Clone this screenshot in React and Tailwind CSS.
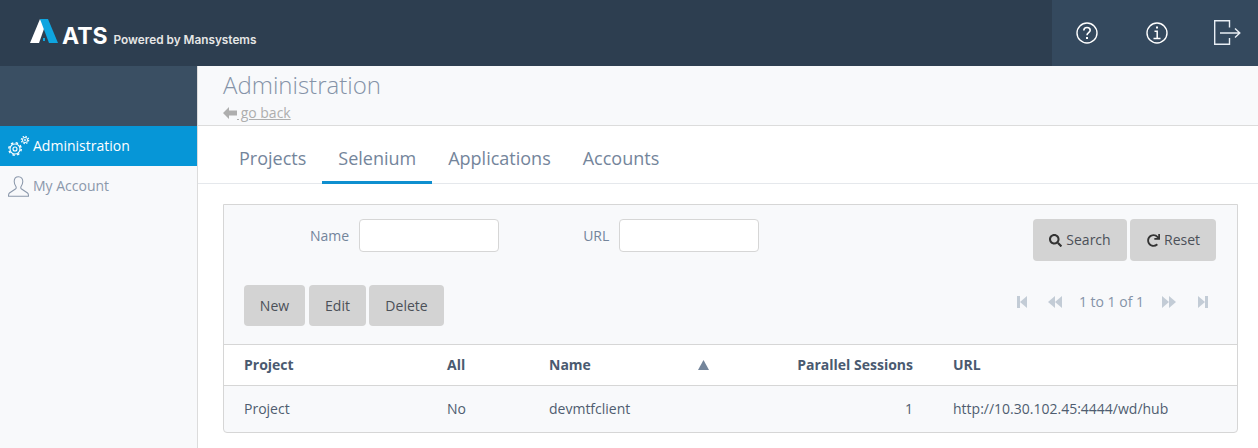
import { FaSearch, FaRedo } from 'react-icons/fa';

function Logo() {
  return (
    <svg width="30" height="27" viewBox="0 0 30 27" className="mb-[4px] shrink-0">
      <polygon points="10,1 0,25 9,25 15,8" fill="#ffffff" />
      <polygon points="10,1 18,1 28,25 19,25" fill="#0ea5e0" />
      <rect x="13" y="20" width="2" height="3" fill="#0ea5e0" />
    </svg>
  );
}

function HelpIcon() {
  return (
    <svg width="22" height="22" viewBox="0 0 22 22" fill="none" stroke="#ffffff" strokeWidth="1.4">
      <circle cx="11" cy="11" r="10" />
      <path d="M7.800 8.500C7.800 6.600 9.200 5.500 11 5.500c1.900 0 3.200 1.100 3.200 2.700 0 2.300-3.200 2.500-3.200 5" strokeWidth="1.600" />
      <rect x="10" y="15" width="2" height="2" fill="#ffffff" stroke="none" />
    </svg>
  );
}

function InfoIcon() {
  return (
    <svg width="22" height="22" viewBox="0 0 22 22" fill="none" stroke="#ffffff" strokeWidth="1.4">
      <circle cx="11" cy="11" r="10" />
      <rect x="10" y="4.500" width="2" height="2" fill="#ffffff" stroke="none" />
      <path d="M8.500 9.200H11.200V16M7.500 16.500h7" strokeWidth="1.500" />
    </svg>
  );
}

function LogoutIcon() {
  return (
    <svg width="27" height="25" viewBox="0 0 27 25" className="mb-[2px]" fill="none" stroke="#e8eef4" strokeWidth="1.4">
      <path d="M15.500 7.500V.7H.7v23.600h14.800V18" />
      <path d="M6 13h20M21 8.500l4.800 4.500-4.800 4.500" />
    </svg>
  );
}

function GearsIcon() {
  return (
    <svg width="24" height="24" viewBox="0 0 24 24" fill="none" stroke="#ffffff">
      <circle cx="8" cy="15" r="5" strokeWidth="1.100" />
      <circle cx="8" cy="15" r="6.200" strokeWidth="1.500" strokeDasharray="2.430 2.430" />
      <circle cx="8" cy="15" r="2" strokeWidth="1.100" />
      <circle cx="18" cy="6" r="2.700" strokeWidth="0.900" />
      <circle cx="18" cy="6" r="3.700" strokeWidth="1.100" strokeDasharray="1.450 1.450" />
      <circle cx="18" cy="6" r="0.900" strokeWidth="0.800" />
    </svg>
  );
}

function UserIcon() {
  return (
    <svg width="21" height="21" viewBox="0 0 22 22" fill="none" stroke="#8b98ab" strokeWidth="1.100">
      <path d="M11 .8c-3 0-4.500 2.200-4.500 5 0 2.300 1 4 1.800 5.300.5 1 .4 1.900-.5 2.500L1.500 17.800c-.7.500-1 1.500-1 3.500h21c0-2-.3-3-1-3.500l-6.300-4.200c-.9-.6-1-1.500-.5-2.500.8-1.300 1.800-3 1.800-5.300 0-2.800-1.500-5-4.500-5z" />
    </svg>
  );
}

function PagerIcon({ type }) {
  const shapes = {
    first: <><rect x="0" y="0" width="3" height="12" /><polygon points="3,6 10,0 10,12" /></>,
    prev: <><polygon points="0,6 7,0 7,12" /><polygon points="7,6 14,0 14,12" /></>,
    next: <><polygon points="0,0 7,6 0,12" /><polygon points="7,0 14,6 7,12" /></>,
    last: <><polygon points="0,0 7,6 0,12" /><rect x="7" y="0" width="3" height="12" /></>,
  };
  const wide = type === 'prev' || type === 'next';
  return (
    <svg width={wide ? 14 : 10} height="12" viewBox={wide ? '0 0 14 12' : '0 0 10 12'} fill="#c3ccd6">
      {shapes[type]}
    </svg>
  );
}

function GrayButton({ children, className }) {
  return (
    <button className={`flex items-center justify-center rounded bg-[#d3d3d3] text-sm text-[#4b5058] ${className}`}>
      {children}
    </button>
  );
}

function App() {
  return (
    <div className="h-[448px] w-[1258px] overflow-hidden bg-white font-['Open_Sans',sans-serif] text-sm text-[#4f5d70]">
      {/* topo */}
      <header className="flex h-[66px] bg-[#2d3e50]">
        <div className="flex flex-1 items-center pl-[30px]">
          <Logo />
          <span className="mt-[7px] ml-[2px] font-['Inter',sans-serif] text-[23px] leading-none font-bold text-white">ATS</span>
          <span className="mt-[15px] ml-[6px] font-['Inter',sans-serif] text-[11.800px] font-semibold text-[#e6e6e6]">Powered by Mansystems</span>
        </div>
        <div className="flex w-[206px] items-center bg-[#34495e] pl-[24px]">
          <HelpIcon />
          <div className="ml-[48px]"><InfoIcon /></div>
          <div className="ml-[46px]"><LogoutIcon /></div>
        </div>
      </header>

      <div className="flex h-[382px]">
        <aside className="w-[198px] shrink-0 border-r border-[#dcdcdc] bg-[#f8f9fb]">
          <div className="h-[60px] bg-[#3a4f63]" />
          <div className="flex h-[40px] items-center bg-[#0696d7] pl-[7px] text-white">
            <GearsIcon />
            <span className="ml-[2px]">Administration</span>
          </div>
          <div className="flex h-[40px] items-center pl-[8px] text-[#8b98ab]">
            <UserIcon />
            <span className="ml-[4px]">My Account</span>
          </div>
        </aside>

        <main className="flex-1">
          <div className="h-[60px] border-b border-[#dcdcdc] bg-[#f8f9fb] pl-[25px]">
            <h1 className="pt-[1px] text-2xl leading-[36px] font-light text-[#8593a8]">Administration</h1>
            <a className="mt-[1px] flex items-center text-sm leading-[18px] text-[#aeaeae]">
              <svg width="14" height="12" viewBox="0 0 14 12" fill="#aeaeae">
                <path d="M6 0 0 6l6 6V8.500h8v-5H6z" />
              </svg>
              <span className="underline">&nbsp;go back</span>
            </a>
          </div>

          <nav className="flex h-[58px] border-b border-[#e5e8ec] pl-[25px] text-lg text-[#74859b]">
            <div className="flex h-[58px] items-center border-b-[3px] border-transparent px-[16px] pt-[8px]">Projects</div>
            <div className="flex h-[58px] items-center border-b-[3px] border-[#0f8fcf] px-[16px] pt-[8px]">Selenium</div>
            <div className="flex h-[58px] items-center border-b-[3px] border-transparent px-[16px] pt-[8px]">Applications</div>
            <div className="flex h-[58px] items-center border-b-[3px] border-transparent px-[16px] pt-[8px]">Accounts</div>
          </nav>

          <section className="mt-[20px] ml-[25px] w-[1015px] rounded-b border border-[#d6d6d6] bg-[#f8f9fb]">
            <div className="h-[139px] pr-[21px] pl-[20px] pt-[14px]">
              <div className="flex items-start justify-between">
                <div className="flex items-center">
                  <label className="ml-[66px] text-[#74859b]">Name</label>
                  <input className="ml-[10px] h-[33px] w-[140px] rounded border border-[#d6d6d6] bg-white" />
                  <label className="ml-[84px] text-[#74859b]">URL</label>
                  <input className="ml-[10px] h-[33px] w-[140px] rounded border border-[#d6d6d6] bg-white" />
                </div>
                <div className="flex gap-[3px]">
                  <GrayButton className="h-[42px] w-[94px]">
                    <FaSearch size={13} className="mr-[4px] text-[#333]" /> Search
                  </GrayButton>
                  <GrayButton className="h-[42px] w-[86px] pl-[1px]">
                    <FaRedo size={13} className="mr-[4px] text-[#333]" /> Reset
                  </GrayButton>
                </div>
              </div>
              <div className="mt-[24px] flex items-start justify-between">
                <div className="flex">
                  <GrayButton className="h-[41px] w-[61px]">New</GrayButton>
                  <GrayButton className="ml-[4px] h-[41px] w-[57px]">Edit</GrayButton>
                  <GrayButton className="ml-[3px] h-[41px] w-[75px]">Delete</GrayButton>
                </div>
                <div className="flex h-[34px] items-center pr-[8px] text-[#8593a8]">
                  <PagerIcon type="first" />
                  <span className="ml-[21px]"><PagerIcon type="prev" /></span>
                  <span className="mr-[18px] ml-[17px]">1 to 1 of 1</span>
                  <PagerIcon type="next" />
                  <span className="ml-[22px]"><PagerIcon type="last" /></span>
                </div>
              </div>
            </div>

            <table className="w-full table-fixed">
              <thead className="border-y border-[#d6d6d6] bg-white text-left font-bold text-[#4a5a70]">
                <tr className="h-[41px]">
                  <th className="w-[223px] pl-[20px]">Project</th>
                  <th className="w-[102px]">All</th>
                  <th className="w-[149px]">Name</th>
                  <th className="w-[255px] pr-[40px]">
                    <div className="flex items-center justify-between">
                      <svg width="11" height="10" viewBox="0 0 11 10" fill="#74859b"><polygon points="5.500,0 11,10 0,10" /></svg>
                      <span>Parallel Sessions</span>
                    </div>
                  </th>
                  <th className="text-left">URL</th>
                </tr>
              </thead>
              <tbody>
                <tr className="h-[46px]">
                  <td className="pl-[20px]">Project</td>
                  <td>No</td>
                  <td>devmtfclient</td>
                  <td className="pr-[40px] text-right">1</td>
                  <td>http://10.30.102.45:4444/wd/hub</td>
                </tr>
              </tbody>
            </table>
          </section>
        </main>
      </div>
    </div>
  );
}

export default App;
